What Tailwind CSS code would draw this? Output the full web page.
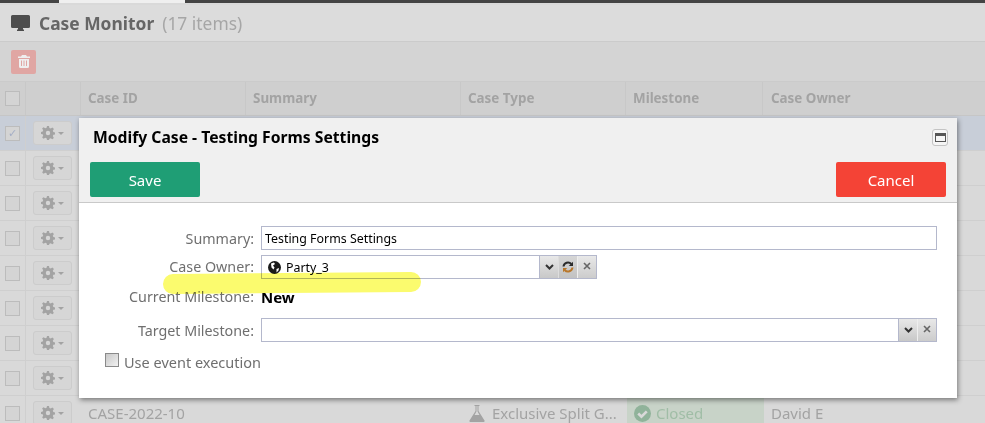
<!DOCTYPE html>
<html lang="en">

<head>
  <meta charset="UTF-8" />
  <title>Case Monitor</title>
  <script src="https://cdn.jsdelivr.net/npm/@tailwindcss/browser@4"></script>
</head>

<body class="relative h-[423px] w-[985px] overflow-hidden bg-[#d9d9d9] font-['Noto_Sans','Open_Sans',sans-serif] text-[14px]">
  <!-- top strip -->
  <div class="flex h-[3px] bg-[#444444]">
    <div class="ml-[59px] w-[126px] bg-[#efefef]"></div>
  </div>

  <!-- page title -->
  <header class="mt-[2px] flex h-[37px] items-center border-b border-[#cbcbcb] bg-[#dcdcdc] pl-[11px]">
    <svg class="h-[16px] w-[19px] fill-[#4d4d4d]" viewBox="0 0 19 16">
      <path d="M1.5 0h16A1.5 1.5 0 0 1 19 1.5v10a1.5 1.5 0 0 1-1.500 1.500H12v1.500h1V16H6v-1.500h1V13H1.500A1.500 1.500 0 0 1 0 11.500v-10A1.500 1.500 0 0 1 1.500 0z" />
    </svg>
    <h1 class="ml-[9px] text-[17.4px] font-bold text-[#666666]">Case Monitor</h1>
    <span class="ml-[8px] text-[17.4px] text-[#a6a6a6]">(17 items)</span>
  </header>

  <!-- toolbar -->
  <div class="flex h-[40px] items-center border-b border-[#cbcbcb] bg-[#d4d4d4] pl-[11px]">
    <button class="flex h-[24px] w-[25px] items-center justify-center rounded-[2px] bg-[#e0a6a3]">
      <svg class="h-[13px] w-[12px] fill-[#efefef]" viewBox="0 0 12 13">
        <path d="M4 0h4l1 1.500h3V3H0V1.500h3zM1 4h10v7.500A1.500 1.500 0 0 1 9.500 13h-7A1.500 1.500 0 0 1 1 11.500zm2 1.500V11h1V5.500zm2.500 0V11h1V5.500zm2.500 0V11h1V5.500z" />
      </svg>
    </button>
  </div>

  <!-- case table -->
  <div class="flex h-[34px] items-center border-b border-[#c6c6c6] bg-[#cfcfcf] text-[13.400px] font-bold text-[#a3a3a3]">
    <div class="flex h-full w-[26px] items-center justify-center border-r border-[#c8c8c8]">
      <span class="h-[15px] w-[15px] border border-[#bcbcbc] bg-[#d4d4d4]"></span>
    </div>
    <div class="h-full w-[55px] border-r border-[#c8c8c8]"></div>
    <div class="flex h-full w-[165px] items-center border-r border-[#c8c8c8] pl-[7px]">Case ID</div>
    <div class="flex h-full w-[215px] items-center border-r border-[#c8c8c8] pl-[7px]">Summary</div>
    <div class="flex h-full w-[165px] items-center border-r border-[#c8c8c8] pl-[7px]">Case Type</div>
    <div class="flex h-full w-[137px] items-center border-r border-[#c8c8c8] pl-[7px]">Milestone</div>
    <div class="flex h-full w-[222px] items-center pl-[8px]">Case Owner</div>
  </div>
  <div id="rows"></div>

  <!-- modify case dialog -->
  <section class="absolute left-[79px] top-[118px] h-[280px] w-[878px] bg-white shadow-[1px_2px_5px_rgba(0,0,0,0.45)]">
    <div class="h-[85px] border-b border-[#c9c9c9] bg-[#f0f0f0] px-[11px]">
      <div class="flex h-[38px] items-center justify-between">
        <h2 class="pl-[3px] pt-[2px] text-[15.700px] font-bold text-black">Modify Case - Testing Forms Settings</h2>
        <button class="-mr-[2px] flex h-[17px] w-[16px] items-center justify-center rounded-[3px] border border-[#c4c4c4] bg-[#f5f5f5]">
          <span class="h-[9px] w-[11px] border border-[#555555] border-t-[3px]"></span>
        </button>
      </div>
      <div class="mt-[6px] flex justify-between">
        <button class="h-[35px] w-[110px] rounded-[2px] bg-[#1f9e75] pt-[2px] text-[15px] text-white">Save</button>
        <button class="h-[35px] w-[110px] rounded-[2px] bg-[#f44336] pt-[2px] text-[15px] text-white">Cancel</button>
      </div>
    </div>

    <div class="relative pt-[23px] text-[14.300px] text-[#6f6f6f]">
      <div class="flex h-[24px] items-center">
        <label class="w-[175px] pt-[2px] text-right">Summary:</label>
        <div class="ml-[7px] flex h-[24px] w-[676px] items-center border border-[#b4b8cc] pl-[3px] pt-[2px] text-[12.400px] text-black">Testing Forms Settings</div>
      </div>

      <div class="mt-[5px] flex h-[24px] items-center">
        <label class="w-[175px] text-right">Case Owner:</label>
        <div class="ml-[7px] flex h-[24px] w-[336px] items-center border border-[#b4b8cc] text-[12.400px] text-black">
          <svg class="ml-[6px] h-[13px] w-[13px]" viewBox="0 0 13 13">
            <circle cx="6.500" cy="6.500" r="6.500" fill="#1a1a1a" />
            <path d="M3 2.500l3-1 1 1.500-2 1.500 1.500 2-1 2-2-2zM8.500 8l2.500-1-.5 2.500-2 2z" fill="#ffffff" />
          </svg>
          <span class="ml-[5px] translate-y-[1px]">Party_3</span>
          <div class="ml-auto flex h-full">
            <span class="flex w-[19px] items-center justify-center border-l border-[#b4b8cc] bg-gradient-to-b from-[#e8e8e8] to-[#c8c8c8]">
              <svg class="h-[6px] w-[9px] fill-none stroke-[#333333] stroke-2" viewBox="0 0 9 6"><path d="M1 1l3.500 3.500L8 1" /></svg>
            </span>
            <span class="flex w-[19px] items-center justify-center border-l border-[#dddddd] bg-gradient-to-b from-[#d6d6d6] to-[#c2c2c2]">
              <svg class="h-[12px] w-[12px]" viewBox="0 0 12 12">
                <path d="M1.500 5.500A4.500 4.500 0 0 1 9.300 3" fill="none" stroke="#2b2b2b" stroke-width="2" />
                <path d="M11 .8V5H6.800z" fill="#2b2b2b" />
                <path d="M10.500 6.500A4.500 4.500 0 0 1 2.700 9" fill="none" stroke="#b9772a" stroke-width="2" />
                <path d="M1 11.200V7h4.200z" fill="#b9772a" />
              </svg>
            </span>
            <span class="flex w-[19px] items-center justify-center border-l border-[#eeeeee] bg-gradient-to-b from-[#e8e8e8] to-[#cccccc] pb-[3px]">
              <svg class="h-[8px] w-[8px] fill-none stroke-[#666666] stroke-[1.600]" viewBox="0 0 8 8"><path d="M1 1l6 6M7 1L1 7" /></svg>
            </span>
          </div>
        </div>
      </div>

      <div class="mt-[5px] flex h-[24px] items-center">
        <label class="w-[175px] pt-[2px] text-right">Current Milestone:</label>
        <span class="ml-[7px] pt-[2px] text-[15px] font-bold text-black">New</span>
      </div>

      <div class="mt-[10px] flex h-[24px] items-center">
        <label class="w-[175px] pt-[2px] text-right">Target Milestone:</label>
        <div class="ml-[7px] flex h-[24px] w-[676px] items-center justify-end border border-[#b4b8cc]">
          <span class="flex h-full w-[19px] items-center justify-center border-l border-[#b4b8cc] bg-gradient-to-b from-[#e8e8e8] to-[#c8c8c8]">
            <svg class="h-[6px] w-[9px] fill-none stroke-[#333333] stroke-2" viewBox="0 0 9 6"><path d="M1 1l3.500 3.500L8 1" /></svg>
          </span>
          <span class="flex h-full w-[19px] items-center justify-center border-l border-[#eeeeee] bg-gradient-to-b from-[#e8e8e8] to-[#cccccc] pb-[3px]">
            <svg class="h-[8px] w-[8px] fill-none stroke-[#666666] stroke-[1.600]" viewBox="0 0 8 8"><path d="M1 1l6 6M7 1L1 7" /></svg>
          </span>
        </div>
      </div>

      <div class="ml-[26px] mt-[10px] flex items-center">
        <span class="h-[14px] w-[14px] -translate-y-[3px] border border-[#8a8a8a] bg-gradient-to-br from-[#c8c8c8] to-[#f2f2f2]"></span>
        <span class="ml-[5px] text-[14.500px]">Use event execution</span>
      </div>

      <!-- highlighter mark -->
      <div class="absolute left-[84px] top-[70px] h-[20px] w-[258px] -rotate-[0.5deg] rounded-full bg-[#fbfb6e] mix-blend-multiply"></div>
    </div>
  </section>

  <script>
    // background rows behind the dialog
    const gear = `<svg class="h-[14px] w-[14px] fill-[#a3a3a3]" viewBox="0 0 14 14"><path d="M6 0h2l.4 2 1.300.6L11.500 1.500 12.900 3l-1.100 1.700.6 1.300 1.600.4v2l-1.700.4-.5 1.300 1 1.800-1.400 1.400-1.700-1.100-1.300.5L8 14H6l-.4-1.800-1.300-.5-1.700 1.100-1.400-1.400 1-1.800-.5-1.300L0 8V6l1.700-.4.5-1.300L1.100 2.600 2.500 1.200l1.800 1.100 1.300-.5zM7 4.800a2.200 2.200 0 1 0 0 4.400 2.200 2.200 0 0 0 0-4.400z"/></svg>`;
    const rows = document.getElementById('rows');
    for (let i = 0; i < 9; i++) {
      const last = i === 8;
      const row = document.createElement('div');
      row.className = 'flex h-[35px] items-center border-b border-[#cfcfcf] text-[15px] text-[#a3a3a3] ' + (i === 0 ? 'bg-[#c8ced8]' : 'bg-[#d9d9d9]');
      row.innerHTML = `
        <div class="flex h-full w-[26px] items-center justify-center border-r border-[#cfcfcf]">
          <span class="flex h-[15px] w-[15px] items-center justify-center border border-[#bcbcbc] bg-[#d4d4d4] text-[11px] text-[#a4aec6]">${i === 0 ? '✓' : ''}</span>
        </div>
        <div class="flex h-full w-[55px] items-center pl-[7px]">
          <span class="flex h-[24px] w-[39px] items-center justify-center gap-[3px] rounded-[3px] border border-[#cccccc] bg-[#d6d6d6]">${gear}<span class="h-0 w-0 border-x-[3px] border-t-[3px] border-x-transparent border-t-[#a3a3a3]"></span></span>
        </div>
        ${last ? `<div class="w-[165px] pl-[7px]">CASE-2022-10</div>
        <div class="flex h-full w-[215px]"></div>
        <div class="flex h-full w-[166px] items-center pl-[8px]">
          <svg class="h-[17px] w-[16px] fill-[#a3a3a3]" viewBox="0 0 15 17"><path d="M5 0h5v1H9v5l6 9.500a1 1 0 0 1-1 1.500H1a1 1 0 0 1-1-1.500L6 6V1H5zM7 1v5.500L5 10h5L8 6.500V1z"/></svg>
          <span class="ml-[7px] whitespace-nowrap">Exclusive Split G...</span>
        </div>
        <div class="flex h-full w-[137px] items-center bg-[#c8d3c8] pl-[7px] text-[#a0bda6]">
          <svg class="h-[17px] w-[17px]" viewBox="0 0 16 16"><circle cx="8" cy="8" r="8" fill="#90b39a"/><path d="M4 8l3 3 5-5" fill="none" stroke="#d9d9d9" stroke-width="2.500"/></svg>
          <span class="ml-[5px]">Closed</span>
        </div>
        <div class="pl-[7px]">David E</div>` : ''}`;
      rows.appendChild(row);
    }
  </script>
</body>

</html>
